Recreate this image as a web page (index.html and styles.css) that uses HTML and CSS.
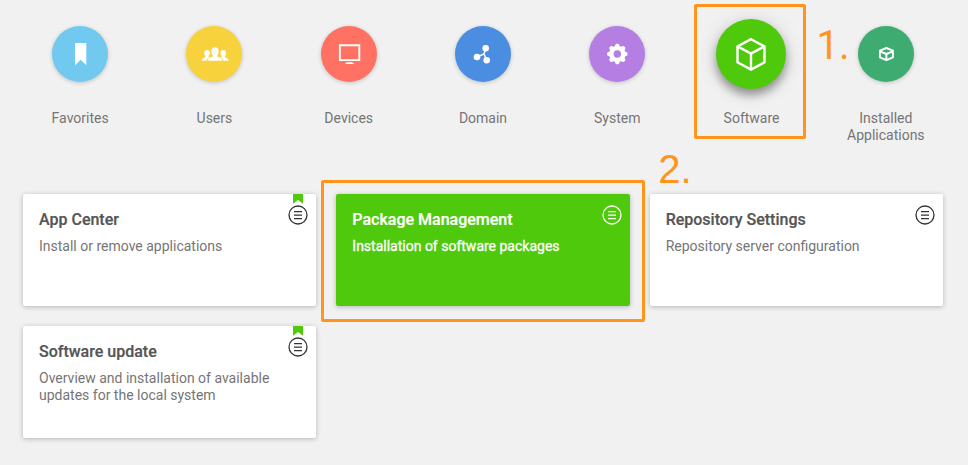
FILE: index.html
```html
<!DOCTYPE html>
<html lang="en">
<head>
<meta charset="utf-8">
<title>Software</title>
<link rel="stylesheet" href="styles.css">
</head>
<body>
<nav class="categories">
  <a class="category">
    <span class="disc favorites"><svg width="56" height="56" viewBox="0 0 56 56"><path fill="#fff" d="M23 17h11.3v22.2l-5.600-5.400-5.700 5.400z"/></svg></span>
    <span class="label">Favorites</span>
  </a>
  <a class="category">
    <span class="disc users"><svg width="56" height="56" viewBox="0 0 56 56"><g fill="#fff"><path d="M29 21.300c2.500 0 3.800 1.700 3.700 4.100-.1 1.900-.8 3-1.500 3.800v1.300c2 1 5.300 1.100 5.300 4.300H21.500c0-3.200 3.300-3.300 5.300-4.300v-1.300c-.8-.8-1.400-1.900-1.500-3.800-.1-2.400 1.200-4.100 3.700-4.100z"/><path d="M21 24c1.700 0 2.800 1.200 2.800 3 0 1.500-.5 2.300-1.200 3v1l1 .5c-2 .7-3 1.800-3.200 3.300h-4.800c0-2.400 2-2.700 3.800-3.600V30c-.7-.7-1.200-1.500-1.200-3 0-1.800 1.100-3 2.800-3zM37.300 24c1.700 0 2.800 1.200 2.800 3 0 1.500-.5 2.300-1.200 3v1.200c1.800.9 3.800 1.200 3.800 3.600h-5.100c-.2-1.500-1.200-2.600-3.200-3.300l1.300-.6V30c-.7-.7-1.200-1.500-1.200-3 0-1.800 1.100-3 2.800-3z"/></g></svg></span>
    <span class="label">Users</span>
  </a>
  <a class="category">
    <span class="disc devices"><svg width="56" height="56" viewBox="0 0 56 56"><path fill="none" stroke="#fff" stroke-width="1.900" d="M18.900 19.200h19.400v14.900H18.900z"/><path fill="#fff" d="M26 36.200h5.200l2.300 1.700h-9.800z"/></svg></span>
    <span class="label">Devices</span>
  </a>
  <a class="category">
    <span class="disc domain"><svg width="56" height="56" viewBox="0 0 56 56"><path fill="none" stroke="#fff" stroke-width="1.400" d="M22 31l7-3.100 1.700-5.700M29 27.900l2.700 6.300"/><g fill="#fff"><circle cx="22" cy="31" r="3.300"/><circle cx="30.700" cy="22.200" r="3.300"/><circle cx="31.700" cy="34.300" r="3.300"/></g></svg></span>
    <span class="label">Domain</span>
  </a>
  <a class="category">
    <span class="disc system"><svg width="56" height="56" viewBox="0 0 56 56"><g transform="translate(28.300 28)"><g fill="#fff"><circle r="8.100"/><path id="tooth" d="M-2.700-7l.9-2.400q.3-.8 1-.8h1.600q.7 0 1 .8l.9 2.400z"/><use href="#tooth" transform="rotate(45)"/><use href="#tooth" transform="rotate(90)"/><use href="#tooth" transform="rotate(135)"/><use href="#tooth" transform="rotate(180)"/><use href="#tooth" transform="rotate(225)"/><use href="#tooth" transform="rotate(270)"/><use href="#tooth" transform="rotate(315)"/></g><circle class="gear-hole" r="3.700"/></g></svg></span>
    <span class="label">System</span>
  </a>
  <a class="category selected">
    <span class="disc software"><svg width="70" height="70" viewBox="0 0 70 70"><path fill="none" stroke="#fff" stroke-width="2.400" d="M35 20.200l13.500 7.200v15.900l-13.500 7.300-13.500-7.300V27.400zM21.500 27.400l13.500 7.200 13.500-7.200M35 34.600v16"/></svg></span>
    <span class="label">Software</span>
    <span class="frame"></span>
    <span class="step step-one">1.</span>
  </a>
  <a class="category">
    <span class="disc installed"><svg width="56" height="56" viewBox="0 0 56 56"><path fill="none" stroke="#fff" stroke-width="1.900" stroke-linejoin="round" d="M28.400 22l6.500 2.600v6.800l-6.500 2.700-6.500-2.700v-6.800zM21.900 25.300l6.500 2.700 6.500-2.700M28.400 28v6"/></svg></span>
    <span class="label">Installed Applications</span>
  </a>
</nav>
<main class="tiles">
  <article class="tile">
    <h2 class="title">App Center</h2>
    <p class="text">Install or remove applications</p>
    <svg class="flag" width="10" height="10" viewBox="0 0 10 10"><path d="M0 0h10v9.800L5 6 0 9.800z"/></svg>
    <svg class="menu" width="20" height="20" viewBox="0 0 20 20"><circle cx="10" cy="10" r="9"/><path d="M6 6.600h8M6 10.100h8M6 13.600h8"/></svg>
  </article>
  <article class="tile active">
    <h2 class="title">Package Management</h2>
    <p class="text">Installation of software packages</p>
    <svg class="menu" width="20" height="20" viewBox="0 0 20 20"><circle cx="10" cy="10" r="9"/><path d="M6 6.600h8M6 10.100h8M6 13.600h8"/></svg>
    <span class="frame"></span>
    <span class="step step-two">2.</span>
  </article>
  <article class="tile">
    <h2 class="title">Repository Settings</h2>
    <p class="text">Repository server configuration</p>
    <svg class="menu" width="20" height="20" viewBox="0 0 20 20"><circle cx="10" cy="10" r="9"/><path d="M6 6.600h8M6 10.100h8M6 13.600h8"/></svg>
  </article>
  <article class="tile">
    <h2 class="title">Software update</h2>
    <p class="text">Overview and installation of available updates for the local system</p>
    <svg class="flag" width="10" height="10" viewBox="0 0 10 10"><path d="M0 0h10v9.800L5 6 0 9.800z"/></svg>
    <svg class="menu" width="20" height="20" viewBox="0 0 20 20"><circle cx="10" cy="10" r="9"/><path d="M6 6.600h8M6 10.100h8M6 13.600h8"/></svg>
  </article>
</main>
</body>
</html>
```
FILE: styles.css
```css
* { box-sizing: border-box; }
body {
  margin: 0;
  height: 465px;
  overflow: hidden;
  background: #f1f1f1;
  color: #757575;
  font: 14px/17px Roboto, sans-serif;
}
.categories {
  display: grid;
  grid-template-columns: repeat(7, 1fr);
  width: 940px;
  height: 194px;
  margin-left: 13px;
  padding-top: 26px;
}
.category {
  position: relative;
  display: flex;
  flex-direction: column;
  align-items: center;
}
.disc {
  width: 56px;
  height: 56px;
  border-radius: 50%;
  box-shadow: 0 1px 4px rgba(0, 0, 0, .2);
}
.disc svg { display: block; }
.favorites { background: #71c9f0; }
.users { background: #f8d23d; }
.devices { background: #ff7162; }
.domain { background: #4b8ee1; }
.system { background: #b57ee2; }
.installed { background: #3eac71; }
.gear-hole { fill: #b57ee2; }
.software {
  width: 70px;
  height: 70px;
  margin: -7px 1px -7px 0;
  background: #4fc90b;
  box-shadow: 0 6px 10px rgba(0, 0, 0, .36), 0 2px 20px rgba(0, 0, 0, .12);
}
.label {
  width: 100px;
  margin-top: 28px;
  text-align: center;
}
.frame {
  position: absolute;
  border: 3px solid #ff951c;
  border-radius: 2px;
}
.category .frame {
  top: -22px;
  left: 10px;
  width: 112px;
  height: 135px;
}
.step {
  position: absolute;
  color: #ff951c;
  font: 40px/46px "Liberation Sans", Arial, sans-serif;
}
.step-one {
  top: -3px;
  left: 132px;
  font-family: Roboto, sans-serif;
}
.tiles {
  display: grid;
  grid-template-columns: repeat(3, 1fr);
  grid-auto-rows: 112px;
  gap: 20px;
  width: 920px;
  margin-left: 23px;
}
.tile {
  position: relative;
  padding: 16px;
  border-radius: 2px;
  background: #fff;
  box-shadow: 0 1px 5px rgba(0, 0, 0, .25);
}
.title {
  margin: 0 0 9px;
  color: #555;
  font-size: 16px;
  font-weight: 500;
  line-height: 19px;
  -webkit-text-stroke: .2px currentColor;
}
.text { margin: 0; }
.flag {
  position: absolute;
  top: 0;
  right: 13px;
  fill: #4fc90b;
}
.menu {
  position: absolute;
  top: 11px;
  right: 8px;
  fill: none;
  stroke: #333;
  stroke-width: 1.3;
}
.active {
  background: #4fc90b;
  color: #fff;
}
.active .title { color: #fff; }
.active .text { -webkit-text-stroke: .3px #fff; }
.active .menu { stroke: #fff; }
.active .frame {
  top: -14px;
  left: -15px;
  width: 324px;
  height: 142px;
}
.step-two { top: -48px; left: 322px; z-index: 1; }
```
